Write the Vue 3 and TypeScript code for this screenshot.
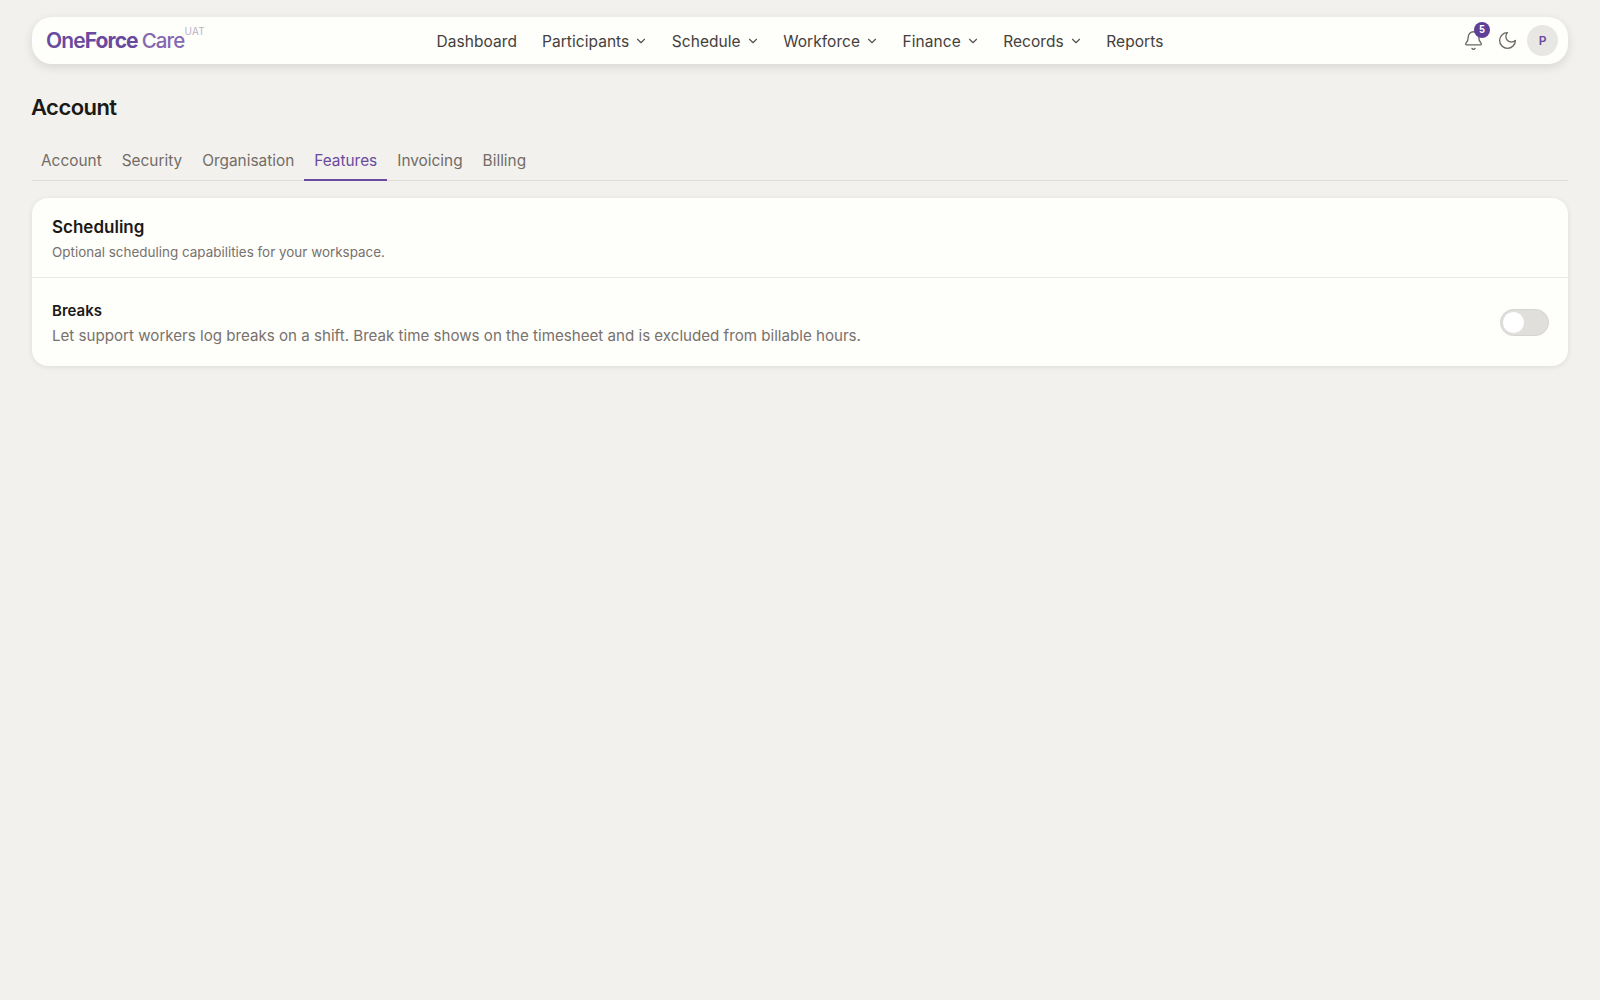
<script setup lang="ts">
const navItems = [
  { label: 'Dashboard', menu: false },
  { label: 'Participants', menu: true },
  { label: 'Schedule', menu: true },
  { label: 'Workforce', menu: true },
  { label: 'Finance', menu: true },
  { label: 'Records', menu: true },
  { label: 'Reports', menu: false },
]
const tabs = ['Account', 'Security', 'Organisation', 'Features', 'Invoicing', 'Billing']
const activeTab = 'Features'
</script>

<template>
  <div class="page">
    <header class="topbar">
      <a class="logo">
        <span class="logo-one">One</span><span class="logo-force">Force</span><span class="logo-care">Care</span>
        <sup class="logo-env">UAT</sup>
      </a>
      <nav class="nav">
        <a v-for="item in navItems" :key="item.label" class="nav-item">
          {{ item.label }}
          <svg v-if="item.menu" class="chevron" viewBox="0 0 24 24">
            <path d="m6 9 6 6 6-6" />
          </svg>
        </a>
      </nav>
      <div class="actions">
        <button class="icon-btn">
          <svg viewBox="0 0 24 24">
            <path d="M10.268 21a2 2 0 0 0 3.464 0" />
            <path d="M3.262 15.326A1 1 0 0 0 4 17h16a1 1 0 0 0 .74-1.673C19.41 13.956 18 12.499 18 8A6 6 0 0 0 6 8c0 4.499-1.411 5.956-2.738 7.326" />
          </svg>
          <span class="badge">5</span>
        </button>
        <button class="icon-btn">
          <svg viewBox="0 0 24 24">
            <path d="M12 3a6 6 0 0 0 9 9 9 9 0 1 1-9-9Z" />
          </svg>
        </button>
        <div class="avatar">P</div>
      </div>
    </header>

    <main>
      <h1 class="title">Account</h1>
      <div class="tabs">
        <a v-for="tab in tabs" :key="tab" class="tab" :class="{ active: tab === activeTab }">{{ tab }}</a>
      </div>

      <section class="card">
        <div class="card-head">
          <h2>Scheduling</h2>
          <p>Optional scheduling capabilities for your workspace.</p>
        </div>
        <div class="row">
          <div>
            <div class="row-title">Breaks</div>
            <div class="row-desc">
              Let support workers log breaks on a shift. Break time shows on the timesheet and is excluded from billable hours.
            </div>
          </div>
          <span class="toggle"><span class="thumb"></span></span>
        </div>
      </section>
    </main>
  </div>
</template>

<style>
html,
body {
  margin: 0;
  background: #f2f1ee;
}
</style>

<style scoped>
.page {
  min-height: 1000px;
  box-sizing: border-box;
  padding: 17px 32px 0;
  font-family: Inter, 'Liberation Sans', sans-serif;
  color: #1c1917;
}
.topbar {
  display: grid;
  grid-template-columns: 1fr auto 1fr;
  align-items: center;
  height: 47px;
  padding: 0 10px;
  background: #fefefb;
  border-radius: 20px;
  box-shadow: 0 3px 10px rgba(40, 35, 25, 0.13);
}
.logo {
  position: relative;
  justify-self: start;
  margin-left: 4px;
  font-size: 21px;
  letter-spacing: -0.9px;
  white-space: nowrap;
  color: #6a4a9c;
}
.logo-one {
  font-weight: 600;
}
.logo-force {
  font-weight: 700;
}
.logo-care {
  margin-left: 4px;
  font-size: 20.5px;
  font-weight: 500;
  color: #8468b0;
}
.logo-env {
  position: absolute;
  left: 100%;
  top: -3px;
  font-size: 10px;
  font-weight: 400;
  letter-spacing: 0.3px;
  color: #b9b2c6;
}
.nav {
  display: flex;
  align-items: center;
  gap: 25px;
  padding-top: 1px;
}
.nav-item {
  display: flex;
  align-items: center;
  gap: 5px;
  font-size: 15.5px;
  letter-spacing: 0.05px;
  color: #44403c;
}
.chevron {
  width: 14px;
  height: 14px;
  margin-right: -1.5px;
  fill: none;
  stroke: #57534e;
  stroke-width: 2;
  stroke-linecap: round;
  stroke-linejoin: round;
}
.actions {
  display: flex;
  align-items: center;
  justify-self: end;
  gap: 2px;
}
.icon-btn {
  position: relative;
  display: flex;
  align-items: center;
  justify-content: center;
  width: 32px;
  height: 32px;
  padding: 0;
  background: none;
  border: 0;
}
.icon-btn svg {
  width: 21px;
  height: 21px;
  fill: none;
  stroke: #6b6661;
  stroke-width: 1.5;
  stroke-linecap: round;
  stroke-linejoin: round;
}
.badge {
  position: absolute;
  top: -3px;
  right: -1px;
  width: 16px;
  height: 16px;
  border-radius: 50%;
  background: #5f3f97;
  color: #fff;
  font-size: 10px;
  font-weight: 600;
  line-height: 16px;
  text-align: center;
}
.avatar {
  width: 31px;
  height: 31px;
  margin-left: 2px;
  border-radius: 50%;
  background: #e9e7e4;
  color: #6a4a9c;
  font-size: 12px;
  font-weight: 600;
  line-height: 31px;
  text-align: center;
}
.title {
  margin: 28px 0 0 -1px;
  font-size: 22px;
  font-weight: 600;
  line-height: 30px;
  letter-spacing: -0.55px;
  color: #1c1917;
}
.tabs {
  display: flex;
  margin-top: 20px;
  border-bottom: 1px solid #dfddd9;
}
.tab {
  padding: 8px 10px 7px;
  border-bottom: 2px solid transparent;
  margin-bottom: -1px;
  font-size: 15.4px;
  line-height: 22px;
  color: #736c66;
}
.tab:first-child {
  margin-left: -1px;
}
.tab.active {
  color: #6a4a9c;
  border-bottom-color: #6a4a9c;
}
.card {
  margin-top: 17px;
  background: #fefefb;
  border-radius: 16px;
  box-shadow: 0 1px 5px rgba(40, 35, 25, 0.1);
}
.card-head {
  padding: 18px 20px 15px;
  border-bottom: 1px solid #ebe9e6;
}
.card-head h2 {
  margin: 0;
  font-size: 17px;
  font-weight: 600;
  line-height: 22px;
}
.card-head p {
  margin: 4px 0 0;
  font-size: 13.45px;
  line-height: 20px;
  color: #78716c;
}
.row {
  display: flex;
  align-items: center;
  justify-content: space-between;
  padding: 22px 19px 19px 20px;
}
.row-title {
  font-size: 15px;
  font-weight: 600;
  line-height: 22px;
}
.row-desc {
  margin-top: 3px;
  font-size: 15.13px;
  line-height: 22px;
  color: #78716c;
}
.toggle {
  box-sizing: border-box;
  display: block;
  width: 49px;
  height: 27px;
  margin-top: -3px;
  padding: 2px;
  border-radius: 14px;
  background: #e0dfdb;
  border: 1px solid #d6d4d0;
}
.thumb {
  display: block;
  width: 21px;
  height: 21px;
  border-radius: 50%;
  background: #fff;
}
</style>
